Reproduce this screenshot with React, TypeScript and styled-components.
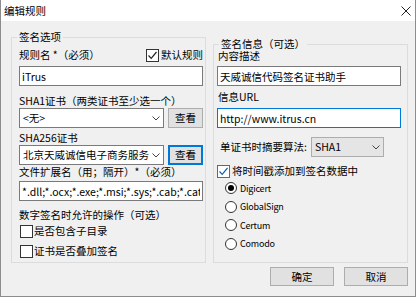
import React from "react";
import styled, { createGlobalStyle } from "styled-components";

const GlobalStyle = createGlobalStyle`
  html, body { margin: 0; padding: 0; background: #ffffff; }
  body {
    font-family: "Noto Sans CJK SC", "Microsoft YaHei", sans-serif;
    font-size: 10.5px;
    color: #000;
  }
  * { box-sizing: border-box; }
`;

const Window = styled.div`
  width: 416px;
  height: 297px;
  border: 1px solid #8c8c8c;
  border-top: none;
  background: #f0f0f0;
  display: flex;
  flex-direction: column;
`;

const TitleBar = styled.div`
  height: 21px;
  flex: none;
  background: #ffffff;
  display: flex;
  align-items: center;
  justify-content: space-between;
  padding: 0 4px 0 3px;
  line-height: 21px;
`;

const TitleText = styled.span`
  font-size: 10.5px;
  color: #000;
`;

const Body = styled.div`
  flex: 1;
  display: flex;
  flex-direction: column;
  gap: 4px;
  padding: 16px 7px 10px 10px;
`;

const Columns = styled.div`
  display: grid;
  grid-template-columns: 195px 195px;
  column-gap: 7px;
`;

const GroupBox = styled.div<{ $offset: number; $pad: string }>`
  position: relative;
  border: 1px solid #dcdcdc;
  margin-top: ${(p) => p.$offset}px;
  padding: ${(p) => p.$pad};
  display: flex;
  flex-direction: column;
`;

const Legend = styled.span`
  position: absolute;
  top: -7px;
  left: 5px;
  padding: 0 2px;
  line-height: 11px;
  height: 11px;
  background: #f0f0f0;
  white-space: nowrap;
`;

const Label = styled.div<{ $mt: number; $ml?: number; $h?: number }>`
  margin-top: ${(p) => p.$mt}px;
  margin-left: ${(p) => p.$ml ?? 0}px;
  height: ${(p) => p.$h ?? 14}px;
  line-height: ${(p) => p.$h ?? 14}px;
  white-space: nowrap;
`;

const Row = styled.div<{ $mt: number; $gap: number; $between?: boolean }>`
  margin-top: ${(p) => p.$mt}px;
  display: flex;
  align-items: center;
  gap: ${(p) => p.$gap}px;
  justify-content: ${(p) => (p.$between ? "space-between" : "flex-start")};
`;

const TextBox = styled.input<{ $mt: number; $focused?: boolean }>`
  margin-top: ${(p) => p.$mt}px;
  width: 100%;
  height: 20px;
  border: 1px solid ${(p) => (p.$focused ? "#0078d7" : "#7a7a7a")};
  background: #ffffff;
  padding: 0 2px;
  font: inherit;
  font-size: 10.5px;
  color: #000;
  outline: none;
  line-height: 18px;
`;

const Combo = styled.div<{ $width: number; $flat?: boolean }>`
  width: ${(p) => p.$width}px;
  flex: none;
  height: 20px;
  border: 1px solid ${(p) => (p.$flat ? "#adadad" : "#7a7a7a")};
  background: ${(p) => (p.$flat ? "#e5e5e5" : "#ffffff")};
  display: flex;
  align-items: center;
  justify-content: space-between;
  padding: 0 3px 0 3px;
  line-height: 18px;
  overflow: hidden;
`;

const ComboText = styled.span`
  white-space: nowrap;
  overflow: hidden;
`;

const Chevron = styled.svg`
  flex: none;
  width: 8px;
  height: 5px;
  margin-left: 2px;
`;

const Button = styled.button<{ $width: number; $height: number; $focused?: boolean }>`
  width: ${(p) => p.$width}px;
  height: ${(p) => p.$height}px;
  flex: none;
  padding: 0;
  margin: 0;
  background: #e1e1e1;
  border: 1px solid ${(p) => (p.$focused ? "#0078d7" : "#adadad")};
  box-shadow: ${(p) => (p.$focused ? "inset 0 0 0 1px #0078d7" : "none")};
  font: inherit;
  font-size: 10.5px;
  color: #000;
  line-height: 14px;
`;

const CheckRow = styled.div<{ $mt: number; $ml: number; $gap: number }>`
  margin-top: ${(p) => p.$mt}px;
  margin-left: ${(p) => p.$ml}px;
  display: flex;
  align-items: center;
  gap: ${(p) => p.$gap}px;
  height: 14px;
  line-height: 14px;
  white-space: nowrap;
`;

const Box = styled.span<{ $accent?: boolean }>`
  width: 13px;
  height: 13px;
  flex: none;
  border: 1px solid ${(p) => (p.$accent ? "#1a7ad4" : "#333333")};
  background: #ffffff;
  display: inline-flex;
  align-items: center;
  justify-content: center;
`;

const RadioRow = styled.div`
  height: 18.5px;
  display: flex;
  align-items: center;
  gap: 3px;
  padding-left: 8px;
  white-space: nowrap;
`;

const RadioText = styled.span`
  font-size: 9px;
  letter-spacing: -0.2px;
`;

const RadioDot = styled.span<{ $on?: boolean }>`
  width: 12px;
  height: 12px;
  flex: none;
  border-radius: 50%;
  border: 1px solid #333333;
  background: #ffffff;
  display: inline-flex;
  align-items: center;
  justify-content: center;
  &::after {
    content: "";
    width: 6px;
    height: 6px;
    border-radius: 50%;
    background: ${(p) => (p.$on ? "#000" : "transparent")};
  }
`;

const RadioList = styled.div`
  margin-top: 1px;
  display: flex;
  flex-direction: column;
`;

const ButtonRow = styled.div`
  display: flex;
  justify-content: flex-end;
  gap: 10px;
`;

const ChevronIcon = () => (
  <Chevron viewBox="0 0 8 5">
    <polyline points="0.5,0.5 4,4 7.5,0.5" fill="none" stroke="#444" strokeWidth="1" />
  </Chevron>
);

const Check = ({ color }: { color: string }) => (
  <svg width="11" height="11" viewBox="0 0 11 11">
    <polyline points="1.5,5.5 4.2,8.3 9.5,2" fill="none" stroke={color} strokeWidth="1.2" />
  </svg>
);

const CheckBox = ({
  label,
  checked,
  accent,
  mt,
  ml,
  gap,
}: {
  label: string;
  checked?: boolean;
  accent?: boolean;
  mt: number;
  ml: number;
  gap: number;
}) => (
  <CheckRow $mt={mt} $ml={ml} $gap={gap}>
    <Box $accent={accent}>{checked && <Check color={accent ? "#1560b0" : "#222"} />}</Box>
    <span>{label}</span>
  </CheckRow>
);

const Radio = ({ label, on }: { label: string; on?: boolean }) => (
  <RadioRow>
    <RadioDot $on={on} />
    <RadioText>{label}</RadioText>
  </RadioRow>
);

export default function App() {
  return (
    <>
      <GlobalStyle />
      <Window>
        <TitleBar>
          <TitleText>编辑规则</TitleText>
          <svg width="10" height="10" viewBox="0 0 10 10">
            <path d="M0.5 0.5 L9.5 9.5 M9.5 0.5 L0.5 9.5" stroke="#222" strokeWidth="1" fill="none" />
          </svg>
        </TitleBar>
        <Body>
          <Columns>
            <GroupBox $offset={0} $pad="10px 2px 4px 7px">
              <Legend>签名选项</Legend>
              <Row $mt={0} $gap={0} $between>
                <Label $mt={0}>规则名 *（必须）</Label>
                <CheckBox label="默认规则" checked mt={0} ml={0} gap={2} />
              </Row>
              <TextBox $mt={4} readOnly defaultValue="iTrus" />
              <Label $mt={8}>SHA1证书（两类证书至少选一个）</Label>
              <Row $mt={0} $gap={4}>
                <Combo $width={145}>
                  <ComboText>&lt;无&gt;</ComboText>
                  <ChevronIcon />
                </Combo>
                <Button $width={35} $height={20}>查看</Button>
              </Row>
              <Label $mt={3}>SHA256证书</Label>
              <Row $mt={0} $gap={4}>
                <Combo $width={145}>
                  <ComboText>北京天威诚信电子商务服务</ComboText>
                  <ChevronIcon />
                </Combo>
                <Button $width={35} $height={20} $focused>查看</Button>
              </Row>
              <Label $mt={0}>文件扩展名（用；隔开）*（必须）</Label>
              <TextBox $mt={2} readOnly defaultValue="*.dll;*.ocx;*.exe;*.msi;*.sys;*.cab;*.cat" />
              <Label $mt={7}>数字签名时允许的操作（可选）</Label>
              <CheckBox label="是否包含子目录" mt={2} ml={1} gap={1} />
              <CheckBox label="证书是否叠加签名" mt={6} ml={1} gap={1} />
            </GroupBox>
            <GroupBox $offset={7} $pad="4px 6px 4px 3px">
              <Legend>签名信息（可选）</Legend>
              <Label $mt={1} $ml={1} $h={12}>内容描述</Label>
              <TextBox $mt={4} readOnly defaultValue="天威诚信代码签名证书助手" />
              <Label $mt={4} $ml={1}>信息URL</Label>
              <TextBox $mt={4} $focused readOnly defaultValue="http://www.itrus.cn" />
              <Row $mt={9} $gap={4}>
                <Label $mt={0} $ml={3}>单证书时摘要算法:</Label>
                <Combo $width={73} $flat>
                  <ComboText>SHA1</ComboText>
                  <ChevronIcon />
                </Combo>
              </Row>
              <CheckBox label="将时间戳添加到签名数据中" checked accent mt={7} ml={0} gap={2} />
              <RadioList>
                <Radio label="Digicert" on />
                <Radio label="GlobalSign" />
                <Radio label="Certum" />
                <Radio label="Comodo" />
              </RadioList>
            </GroupBox>
          </Columns>
          <ButtonRow>
            <Button $width={64} $height={19}>确定</Button>
            <Button $width={64} $height={19}>取消</Button>
          </ButtonRow>
        </Body>
      </Window>
    </>
  );
}
